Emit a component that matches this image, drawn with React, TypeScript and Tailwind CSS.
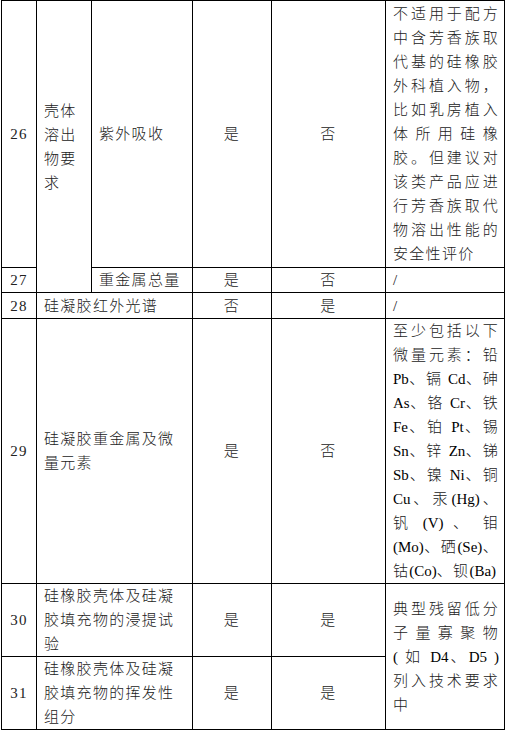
import type { ReactNode } from "react"

// latin runs are set in plain Times, no extra spacing
function L({ children }: { children: ReactNode }) {
    return <span className="tracking-normal font-normal text-black">{children}</span>
}

// one line per visual line so the wraps match the printed table
function Justified({ lines, className = "" }: { lines: ReactNode[]; className?: string }) {
    return (
        <div className={className}>
            {lines.map((l, i) => (
                <div
                    key={i}
                    className={i < lines.length - 1 ? "text-justify [text-align-last:justify] whitespace-nowrap" : "text-left whitespace-nowrap"}
                >
                    {l}
                </div>
            ))}
        </div>
    )
}

function Td({ children, center, colSpan, rowSpan, extra = "" }: { children?: ReactNode; center?: boolean; colSpan?: number; rowSpan?: number; extra?: string }) {
    return (
        <td
            colSpan={colSpan}
            rowSpan={rowSpan}
            className={`border border-black align-middle py-0 ${center ? "text-center px-0" : "text-left pl-[7px] pr-[5px]"} ${extra}`}
        >
            {children}
        </td>
    )
}

export default function App() {
    return (
        <div className="w-[506px] h-[730px] bg-white overflow-hidden">
            <table className="ml-[1px] w-[503px] table-fixed border-collapse font-['Liberation_Serif','Noto_Sans_CJK_SC',serif] text-[15px] leading-[24px] tracking-[1.3px] text-[#222] font-light">
                <colgroup>
                    <col className="w-[35px]" />
                    <col className="w-[55px]" />
                    <col className="w-[101px]" />
                    <col className="w-[79px]" />
                    <col className="w-[114px]" />
                    <col className="w-[119px]" />
                </colgroup>
                <tbody>
                    {/* 26 */}
                    <tr>
                        <Td center>26</Td>
                        <Td rowSpan={2}>壳体溶出物要求</Td>
                        <Td>紫外吸收</Td>
                        <Td center>是</Td>
                        <Td center>否</Td>
                        <Td>
                            <Justified
                                className="py-px"
                                lines={[
                                    "不适用于配方",
                                    "中含芳香族取",
                                    "代基的硅橡胶",
                                    "外科植入物，",
                                    "比如乳房植入",
                                    "体所用硅橡",
                                    "胶。但建议对",
                                    "该类产品应进",
                                    "行芳香族取代",
                                    "物溶出性能的",
                                    "安全性评价",
                                ]}
                            />
                        </Td>
                    </tr>
                    {/* 27 */}
                    <tr>
                        <Td center>27</Td>
                        <Td>重金属总量</Td>
                        <Td center>是</Td>
                        <Td center>否</Td>
                        <Td>/</Td>
                    </tr>
                    {/* 28 */}
                    <tr>
                        <Td center extra="pt-px">28</Td>
                        <Td colSpan={2}>硅凝胶红外光谱</Td>
                        <Td center>否</Td>
                        <Td center>是</Td>
                        <Td>/</Td>
                    </tr>
                    {/* 29 */}
                    <tr>
                        <Td center>29</Td>
                        <Td colSpan={2}>硅凝胶重金属及微量元素</Td>
                        <Td center>是</Td>
                        <Td center>否</Td>
                        <Td>
                            <Justified
                                lines={[
                                    "至少包括以下",
                                    "微量元素：铅",
                                    <><L>Pb</L>、镉 <L>Cd</L>、砷</>,
                                    <><L>As</L>、铬 <L>Cr</L>、铁</>,
                                    <><L>Fe</L>、铂 <L>Pt</L>、锡</>,
                                    <><L>Sn</L>、锌 <L>Zn</L>、锑</>,
                                    <><L>Sb</L>、镍 <L>Ni</L>、铜</>,
                                    <><L>Cu</L>、汞<L>(Hg)</L>、</>,
                                    <>钒 <L>(V)</L> 、 钼</>,
                                    <><L>(Mo)</L>、硒<L>(Se)</L>、</>,
                                    <>钴<L>(Co)</L>、钡<L>(Ba)</L></>,
                                ]}
                            />
                        </Td>
                    </tr>
                    {/* 30 */}
                    <tr>
                        <Td center>30</Td>
                        <Td colSpan={2}>硅橡胶壳体及硅凝胶填充物的浸提试验</Td>
                        <Td center>是</Td>
                        <Td center>是</Td>
                        <Td rowSpan={2}>
                            <Justified
                                lines={[
                                    "典型残留低分",
                                    "子量寡聚物",
                                    <><L>(</L> 如 <L>D4</L>、<L>D5</L> <L>)</L></>,
                                    "列入技术要求",
                                    "中",
                                ]}
                            />
                        </Td>
                    </tr>
                    {/* 31 */}
                    <tr>
                        <Td center>31</Td>
                        <Td colSpan={2}>硅橡胶壳体及硅凝胶填充物的挥发性组分</Td>
                        <Td center>是</Td>
                        <Td center>是</Td>
                    </tr>
                </tbody>
            </table>
        </div>
    )
}
